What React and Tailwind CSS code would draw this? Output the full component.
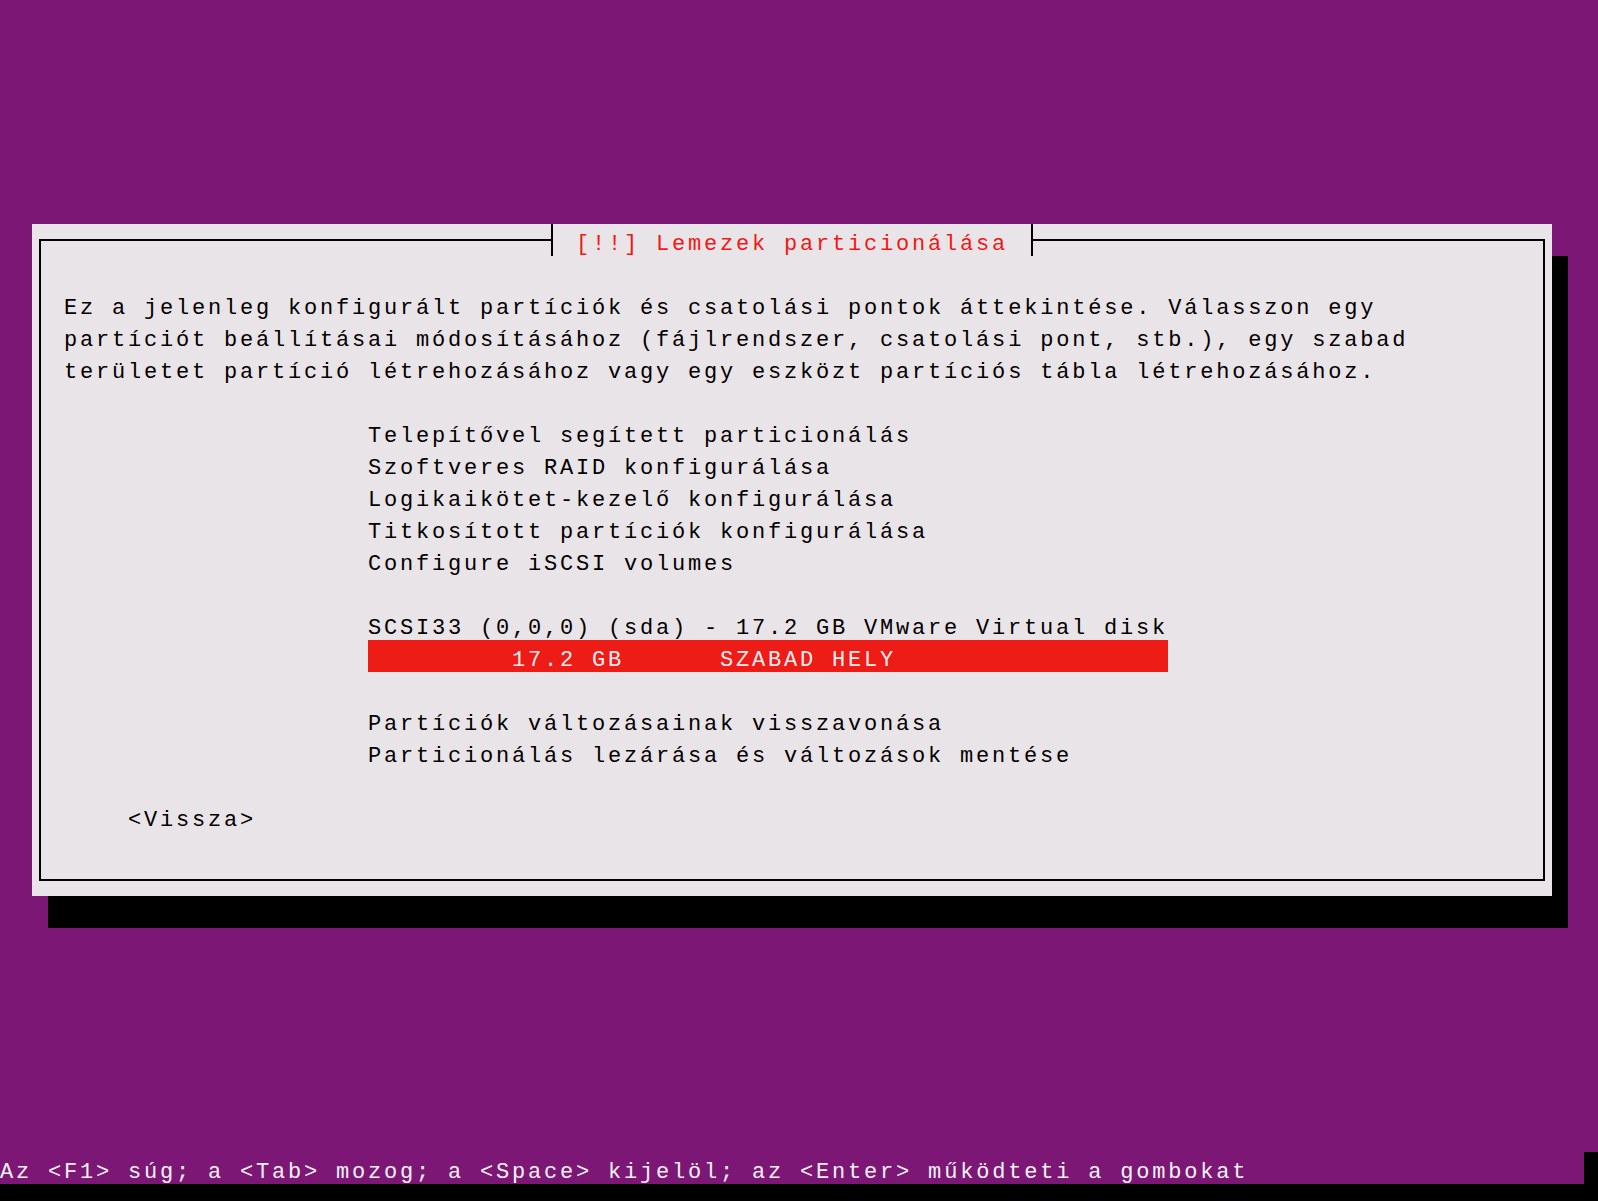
export default function App() {
  const para = [
    'Ez a jelenleg konfigurált partíciók és csatolási pontok áttekintése. Válasszon egy',
    'partíciót beállításai módosításához (fájlrendszer, csatolási pont, stb.), egy szabad',
    'területet partíció létrehozásához vagy egy eszközt partíciós tábla létrehozásához.',
  ];
  const menu = [
    'Telepítővel segített particionálás',
    'Szoftveres RAID konfigurálása',
    'Logikaikötet-kezelő konfigurálása',
    'Titkosított partíciók konfigurálása',
    'Configure iSCSI volumes',
  ];
  const line = 'h-[32px] leading-[41px] whitespace-pre';

  return (
    <div className="w-[1598px] h-[1201px] bg-[#7c1775] flex flex-col overflow-hidden font-['Liberation_Mono',monospace] text-[22px] tracking-[2.8px]">
      <div className="h-[224px] shrink-0" />

      <div className="ml-[32px] w-[1520px] h-[672px] shrink-0 bg-[#e8e4e8] shadow-[16px_32px_0_0_#000] pt-[15px] px-[7px] pb-[15px]">
        <div className="relative h-full border-2 border-black pt-[47px] pl-[23px] text-black">
          <div className="absolute left-[510px] top-[-17px] h-[32px] w-[482px] border-x-2 border-black bg-[#e8e4e8] pl-[23px] leading-[41px] whitespace-pre text-[#f01814]">
            [!!] Lemezek particionálása
          </div>

          {para.map(t => <div key={t} className={line}>{t}</div>)}
          <div className="h-[32px]" />

          <div className="pl-[304px]">
            {menu.map(t => <div key={t} className={line}>{t}</div>)}
            <div className="h-[32px]" />
            <div className={line}>SCSI33 (0,0,0) (sda) - 17.2 GB VMware Virtual disk</div>
            <div className={`${line} w-[800px] bg-[#ee1c16] text-[#f6eeee]`}>{'         17.2 GB      SZABAD HELY'}</div>
            <div className="h-[32px]" />
            <div className={line}>Partíciók változásainak visszavonása</div>
            <div className={line}>Particionálás lezárása és változások mentése</div>
          </div>

          <div className="h-[32px]" />
          <div className={`${line} pl-[64px]`}>{'<Vissza>'}</div>
        </div>
      </div>

      <div className="flex-1" />

      <div className="h-[32px] shrink-0 flex text-[#f2f2f2]">
        <div className="flex-1 leading-[41px] whitespace-pre">{'Az <F1> súg; a <Tab> mozog; a <Space> kijelöl; az <Enter> működteti a gombokat'}</div>
        <div className="w-[14px] bg-black" />
      </div>
      <div className="h-[17px] shrink-0 bg-black" />
    </div>
  );
}
